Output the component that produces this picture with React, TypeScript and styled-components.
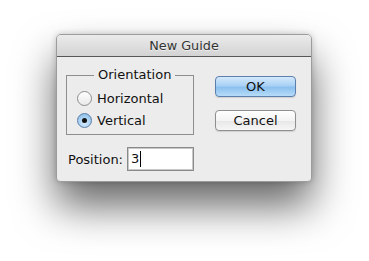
import styled, { createGlobalStyle } from 'styled-components';

const GlobalStyle = createGlobalStyle`
  html, body {
    margin: 0;
    background: #ffffff;
  }
  body {
    font-family: "DejaVu Sans", "Liberation Sans", sans-serif;
    font-size: 13px;
    color: #111;
  }
`;

const Page = styled.div`
  padding: 34px 0 0 56px;
  width: 369px;
  height: 261px;
  box-sizing: border-box;
  overflow: hidden;
`;

const Window = styled.div`
  width: 256px;
  height: 148px;
  box-sizing: border-box;
  border: 1px solid #9c9c9c;
  border-radius: 5px 5px 4px 4px;
  background: #ececec;
  box-shadow: 0 24px 42px rgba(0, 0, 0, 0.6), 0 0 6px rgba(0, 0, 0, 0.2);
  overflow: hidden;
  display: flex;
  flex-direction: column;
`;

const TitleBar = styled.div`
  height: 21px;
  flex: none;
  display: flex;
  align-items: center;
  justify-content: center;
  background: linear-gradient(#ebebeb, #d3d3d3);
  border-bottom: 1px solid #575757;
  color: #333;
  font-size: 12.8px;
  text-shadow: 0 1px 0 rgba(255, 255, 255, 0.6);
`;

const Body = styled.div`
  padding: 10px 15px 0 9px;
  display: flex;
  flex-direction: column;
`;

const TopRow = styled.div`
  display: flex;
  align-items: flex-start;
  justify-content: space-between;
`;

const GroupBox = styled.fieldset`
  margin: 0;
  width: 128px;
  box-sizing: border-box;
  border: 1px solid #8e8e8e;
  padding: 4px 0 3px 10px;
`;

const Legend = styled.legend`
  margin-left: 17px;
  padding: 0 4px;
  line-height: 16px;
`;

const RadioRow = styled.label`
  height: 22px;
  display: flex;
  align-items: center;
  gap: 5px;
`;

const RadioDot = styled.span<{ $checked?: boolean }>`
  width: 15px;
  height: 15px;
  box-sizing: border-box;
  border-radius: 50%;
  border: 1px solid ${(p) => (p.$checked ? '#5b7ea8' : '#8d8d8d')};
  background: ${(p) =>
    p.$checked
      ? 'radial-gradient(circle at 50% 70%, #d6ecfc 0%, #a6cff2 55%, #7fb4e2 100%)'
      : 'linear-gradient(#ffffff, #e9e9e9)'};
  display: flex;
  align-items: center;
  justify-content: center;
  &::after {
    content: '';
    display: ${(p) => (p.$checked ? 'block' : 'none')};
    width: 5px;
    height: 5px;
    border-radius: 50%;
    background: #111;
  }
`;

const ButtonColumn = styled.div`
  display: flex;
  flex-direction: column;
  gap: 13px;
  padding-top: 9px;
`;

const Button = styled.button<{ $primary?: boolean }>`
  width: 81px;
  height: 21px;
  padding: 0;
  font-family: inherit;
  font-size: 13px;
  color: #111;
  border-radius: 4px;
  border: 1px solid ${(p) => (p.$primary ? '#5d7fae' : '#8f8f8f')};
  background: ${(p) =>
    p.$primary
      ? 'linear-gradient(#d4e9fb 0%, #a9d1f5 45%, #8cc0ee 55%, #b7dcf9 100%)'
      : 'linear-gradient(#ffffff 0%, #f4f4f4 50%, #e8e8e8 55%, #f6f6f6 100%)'};
  box-shadow: 0 1px 1px rgba(0, 0, 0, 0.12);
`;

const PositionRow = styled.div`
  display: flex;
  align-items: center;
  gap: 4px;
  margin-top: 12px;
  padding-left: 2px;
`;

const Field = styled.div`
  width: 67px;
  height: 24px;
  box-sizing: border-box;
  border: 1px solid #8a8a8a;
  box-shadow: inset 0 0 0 1px #c8c8c8;
  background: #fff;
  display: flex;
  align-items: center;
  padding-left: 3px;
`;

const Caret = styled.span`
  border-right: 1px solid #000;
  line-height: 16px;
  padding-right: 1px;
`;

export default function App() {
  return (
    <Page>
      <GlobalStyle />
      <Window>
        <TitleBar>New Guide</TitleBar>
        <Body>
          <TopRow>
            <GroupBox>
              <Legend>Orientation</Legend>
              <RadioRow>
                <RadioDot />
                Horizontal
              </RadioRow>
              <RadioRow>
                <RadioDot $checked />
                Vertical
              </RadioRow>
            </GroupBox>
            <ButtonColumn>
              <Button $primary>OK</Button>
              <Button>Cancel</Button>
            </ButtonColumn>
          </TopRow>
          <PositionRow>
            Position:
            <Field>
              <Caret>3</Caret>
            </Field>
          </PositionRow>
        </Body>
      </Window>
    </Page>
  );
}
